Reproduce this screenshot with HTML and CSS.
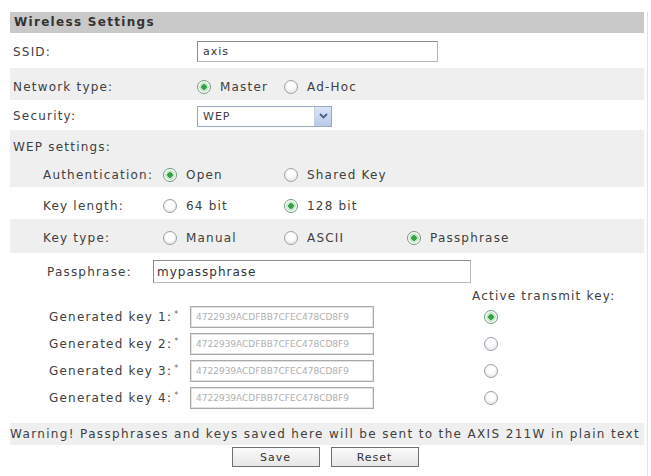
FILE: index.html
```html
<!DOCTYPE html>
<html lang="en">
<head>
  <meta charset="UTF-8" />
  <title>Wireless Settings</title>
  <link rel="stylesheet" href="styles.css">
</head>
<body>
  <div class="panel">
    <div class="head">Wireless Settings</div>

    <div class="row ssid-row">
      <span class="label">SSID:</span>
      <input type="text" class="text ssid" value="axis" />
    </div>

    <div class="row alt net-row">
      <span class="label">Network type:</span>
      <div class="opts net">
        <label class="opt"><span class="radio on"></span>Master</label>
        <label class="opt"><span class="radio"></span>Ad-Hoc</label>
      </div>
    </div>

    <div class="row sec">
      <span class="label">Security:</span>
      <div class="select">
        <span>WEP</span>
        <span class="arrow">
          <svg width="9" height="6" viewBox="0 0 9 6"><path d="M1 1 L4.5 4.5 L8 1" fill="none" stroke="#4d6185" stroke-width="1.8"/></svg>
        </span>
      </div>
    </div>

    <div class="row alt wep">
      <span class="label">WEP settings:</span>
    </div>

    <div class="sub alt auth">
      <span class="label">Authentication:</span>
      <label class="opt"><span class="radio on"></span>Open</label>
      <label class="opt"><span class="radio"></span>Shared Key</label>
    </div>

    <div class="sub len">
      <span class="label">Key length:</span>
      <label class="opt"><span class="radio"></span>64 bit</label>
      <label class="opt"><span class="radio on"></span>128 bit</label>
    </div>

    <div class="sub alt type">
      <span class="label">Key type:</span>
      <label class="opt"><span class="radio"></span>Manual</label>
      <label class="opt"><span class="radio"></span>ASCII</label>
      <label class="opt"><span class="radio on"></span>Passphrase</label>
    </div>

    <div class="pass">
      <span class="label">Passphrase:</span>
      <input type="text" class="text phrase" value="mypassphrase" />
    </div>

    <div class="active">Active transmit key:</div>

    <div class="keys">
      <span class="label">Generated key 1:<sup>*</sup></span>
      <input type="text" class="text key" value="4722939ACDFBB7CFEC478CD8F9" readonly />
      <span class="radio on"></span>

      <span class="label">Generated key 2:<sup>*</sup></span>
      <input type="text" class="text key" value="4722939ACDFBB7CFEC478CD8F9" readonly />
      <span class="radio"></span>

      <span class="label">Generated key 3:<sup>*</sup></span>
      <input type="text" class="text key" value="4722939ACDFBB7CFEC478CD8F9" readonly />
      <span class="radio"></span>

      <span class="label">Generated key 4:<sup>*</sup></span>
      <input type="text" class="text key" value="4722939ACDFBB7CFEC478CD8F9" readonly />
      <span class="radio"></span>
    </div>

    <div class="warning">Warning! Passphrases and keys saved here will be sent to the AXIS 211W in plain text</div>

    <div class="buttons">
      <button type="button">Save</button>
      <button type="button">Reset</button>
    </div>
  </div>
</body>
</html>
```

FILE: styles.css
```css
body {
  margin: 0;
  background-color: #fff;
  font-family: "DejaVu Sans", Verdana, sans-serif;
  font-size: 12px;
  letter-spacing: 1.2px;
  color: #404040;
}

.panel {
  margin: 12px 3px 0 10px;
  padding-right: 3px;
  border-right: 1px solid #e4e4e4;
  min-height: 464px;
}

.head {
  height: 21px;
  line-height: 21px;
  padding-left: 4px;
  background-color: #c9c9c9;
  font-weight: bold;
  font-size: 12px;
  letter-spacing: 1.3px;
  color: #333;
}

.alt {
  background-color: #efefef;
}

.row,
.sub {
  box-sizing: border-box;
  display: grid;
  align-items: center;
}

.row {
  grid-template-columns: 187px 1fr;
}

.row .label {
  padding-left: 3px;
}

.ssid-row { height: 35px; padding-top: 2px; }
.net-row { height: 32px; padding-top: 5px; }
.sec { height: 30px; padding-top: 2px; }
.wep { height: 32px; padding-top: 2px; }

.text {
  font-family: "DejaVu Sans", Verdana, sans-serif;
  font-size: 11px;
  letter-spacing: 1px;
  color: #333;
  border: 1px solid #8c8c8c;
  border-right-color: #b8b8b8;
  border-bottom-color: #b8b8b8;
  box-sizing: border-box;
  padding: 0 0 0 5px;
  margin: 0;
  background-color: #fff;
}

.ssid {
  width: 241px;
  height: 21px;
}

.opts {
  display: flex;
}

.net .opt:first-child {
  width: 87px;
}

.opt {
  display: flex;
  align-items: center;
  gap: 9px;
}

.radio {
  display: inline-block;
  width: 14px;
  height: 14px;
  box-sizing: border-box;
  border: 1px solid #97a2ad;
  border-radius: 50%;
  background: radial-gradient(circle at 50% 40%, #fff 35%, #dadada 100%);
  flex: none;
}

.radio.on {
  border-color: #6f9a79;
  background: radial-gradient(circle, #36a047 0 2.5px, #c9e8cd 3px 4.5px, #fff 5px);
}

.select {
  width: 135px;
  height: 21px;
  box-sizing: border-box;
  border: 1px solid #9aaac4;
  display: flex;
  align-items: center;
  justify-content: space-between;
  padding-left: 5px;
  font-size: 11px;
  letter-spacing: 1px;
}

.arrow {
  width: 16px;
  height: 19px;
  background: linear-gradient(#dbe4f6, #b9c9ea);
  border-left: 1px solid #c6d2ea;
  display: flex;
  align-items: center;
  justify-content: center;
}

.sub {
  grid-template-columns: 120px 121px 123px 1fr;
  padding-left: 33px;
}

.auth { height: 25px; }
.len { height: 32px; padding-top: 6px; }
.type { height: 34px; padding-top: 4px; }

.pass {
  display: flex;
  align-items: center;
  height: 37px;
  padding-left: 37px;
}

.pass .label {
  width: 106px;
}

.phrase {
  width: 318px;
  height: 23px;
  font-size: 12px;
  padding-left: 3px;
}

.active {
  padding-left: 462px;
  height: 13px;
  line-height: 13px;
}

.keys {
  display: grid;
  grid-template-columns: 141px 184px 1fr;
  grid-auto-rows: 27px;
  align-items: center;
  padding-left: 39px;
}

.keys .label sup {
  font-size: 8px;
  vertical-align: 4px;
  margin-left: 2px;
  color: #666;
}

.key {
  height: 22px;
  font-size: 9px;
  letter-spacing: 0;
  color: #b0b0b0;
  border-color: #a9a9a9;
  box-shadow: inset 0 0 0 1px #e2e2e2;
}

.keys .radio {
  margin-left: 110px;
}

.warning {
  margin-top: 12px;
  height: 22px;
  line-height: 22px;
  background-color: #efefef;
  white-space: nowrap;
  letter-spacing: 1.35px;
}

.buttons {
  display: flex;
  justify-content: center;
  gap: 11px;
  padding-top: 2px;
  margin-left: -4px;
}

button {
  width: 88px;
  height: 20px;
  font-family: "DejaVu Sans", Verdana, sans-serif;
  font-size: 11px;
  letter-spacing: 1px;
  color: #333;
  border: 1px solid #707070;
  background: linear-gradient(#fbfbfb, #e6e6e6);
  padding: 0;
}
```
